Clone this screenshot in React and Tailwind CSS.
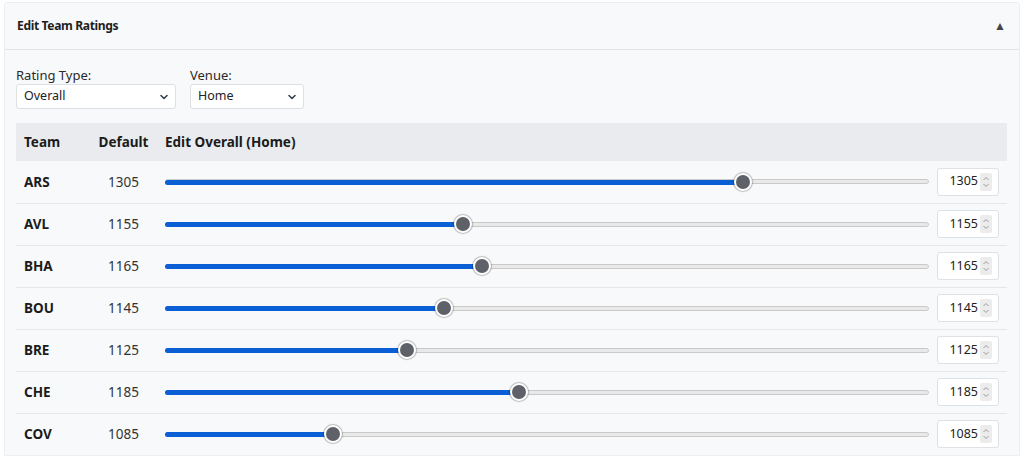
const teams = [
  { code: "ARS", rating: 1305 },
  { code: "AVL", rating: 1155 },
  { code: "BHA", rating: 1165 },
  { code: "BOU", rating: 1145 },
  { code: "BRE", rating: 1125 },
  { code: "CHE", rating: 1185 },
  { code: "COV", rating: 1085 },
];

const MIN = 1000;
const MAX = 1400;

function Chevron() {
  return (
    <svg width="10" height="10" viewBox="0 0 10 10" className="text-gray-700">
      <path d="M2 3.5 L5 6.5 L8 3.5" fill="none" stroke="currentColor" strokeWidth="1.6" strokeLinecap="round" strokeLinejoin="round" />
    </svg>
  );
}

function Select({ value, width }) {
  return (
    <div
      className={`flex items-center justify-between h-[25px] bg-white border border-[#dcdfe3] rounded-[3px] pl-[7px] pr-[6px] text-[12.5px] text-[#222] ${width}`}
    >
      <span>{value}</span>
      <Chevron />
    </div>
  );
}

// Custom range slider: blue fill, grey thumb
function Slider({ value }) {
  const pct = (value - MIN) / (MAX - MIN);
  return (
    <div className="relative h-[18px] flex items-center">
      <div className="w-full h-[5px] rounded-full bg-[#e9e9e9] border border-[#c9c9c9]" />
      <div className="absolute inset-0 mx-[9px]">
        <div
          className="absolute left-[-9px] top-[7px] h-[5px] rounded-full bg-[#0b5fd4]"
          style={{ width: `calc(${pct * 100}% + 9px)` }}
        />
        <div
          className="absolute top-0 w-[18px] h-[18px] -ml-[9px] rounded-full bg-[#5f6169] border-2 border-white shadow-[0_0_1px_1px_rgba(0,0,0,0.25)]"
          style={{ left: `${pct * 100}%` }}
        />
      </div>
    </div>
  );
}

function NumberBox({ value }) {
  return (
    <div className="flex items-center justify-end w-[62px] h-[28px] bg-white border border-[#dee2e6] rounded-[3px] pr-[6px] text-[12.5px] text-[#222]">
      <span className="mr-[2px]">{value}</span>
      <span className="flex flex-col items-center justify-center w-[12px] h-[18px] bg-[#ececec] rounded-[2px]">
        <svg width="8" height="14" viewBox="0 0 8 14">
          <path d="M1.5 5 L4 2.5 L6.5 5" fill="none" stroke="#9a9a9a" strokeWidth="1" />
          <path d="M1.5 9 L4 11.5 L6.5 9" fill="none" stroke="#9a9a9a" strokeWidth="1" />
        </svg>
      </span>
    </div>
  );
}

export default function App() {
  return (
    <div
      className="w-[1024px] h-[458px] bg-white pt-[2px] px-[4px] overflow-hidden"
      style={{ fontFamily: '"Noto Sans", "Open Sans", "Liberation Sans", sans-serif' }}
    >
      <div className="w-[1016px] bg-[#f8f9fa] border border-[#eceef0] rounded-t-[3px]">
        {/* Header */}
        <div className="flex items-center justify-between h-[47px] pl-[12px] pr-[13px] border-b border-[#e1e3e6]">
          <h2 className="text-[13px] font-bold tracking-[-0.4px] text-[#1e1e1e] scale-x-[0.93] origin-left">
            Edit Team Ratings
          </h2>
          <span className="text-[12px] text-[#444]">▲</span>
        </div>

        {/* Body */}
        <div className="pl-[11px] pr-[12px] pt-[17px]">
          <div className="flex gap-[14px]">
            <div className="flex flex-col">
              <label className="text-[13px] text-[#2a2a2a] leading-[16px] mb-[1px]">Rating Type:</label>
              <Select value="Overall" width="w-[160px]" />
            </div>
            <div className="flex flex-col">
              <label className="text-[13px] text-[#2a2a2a] leading-[16px] mb-[1px]">Venue:</label>
              <Select value="Home" width="w-[114px]" />
            </div>
          </div>

          <table className="w-[991px] mt-[14px] border-collapse text-[13.5px] text-[#1b1b1b]">
            <thead>
              <tr className="bg-[#e9ebee] h-[38px]">
                <th className="w-[74px] text-left pl-[8px] font-bold">Team</th>
                <th className="w-[67px] text-center font-bold">Default</th>
                <th className="text-left pl-[8px] font-bold">Edit Overall (Home)</th>
                <th className="w-[78px]" />
              </tr>
            </thead>
            <tbody>
              {teams.map((t, i) => (
                <tr key={t.code} className={`h-[42px] ${i > 0 ? "border-t border-[#e4e6e9]" : ""}`}>
                  <td className="pl-[8px] font-bold">{t.code}</td>
                  <td className="text-center text-[#333]">{t.rating}</td>
                  <td className="pl-[8px]">
                    <Slider value={t.rating} />
                  </td>
                  <td className="pl-[8px]">
                    <NumberBox value={t.rating} />
                  </td>
                </tr>
              ))}
            </tbody>
          </table>
        </div>
      </div>
    </div>
  );
}
